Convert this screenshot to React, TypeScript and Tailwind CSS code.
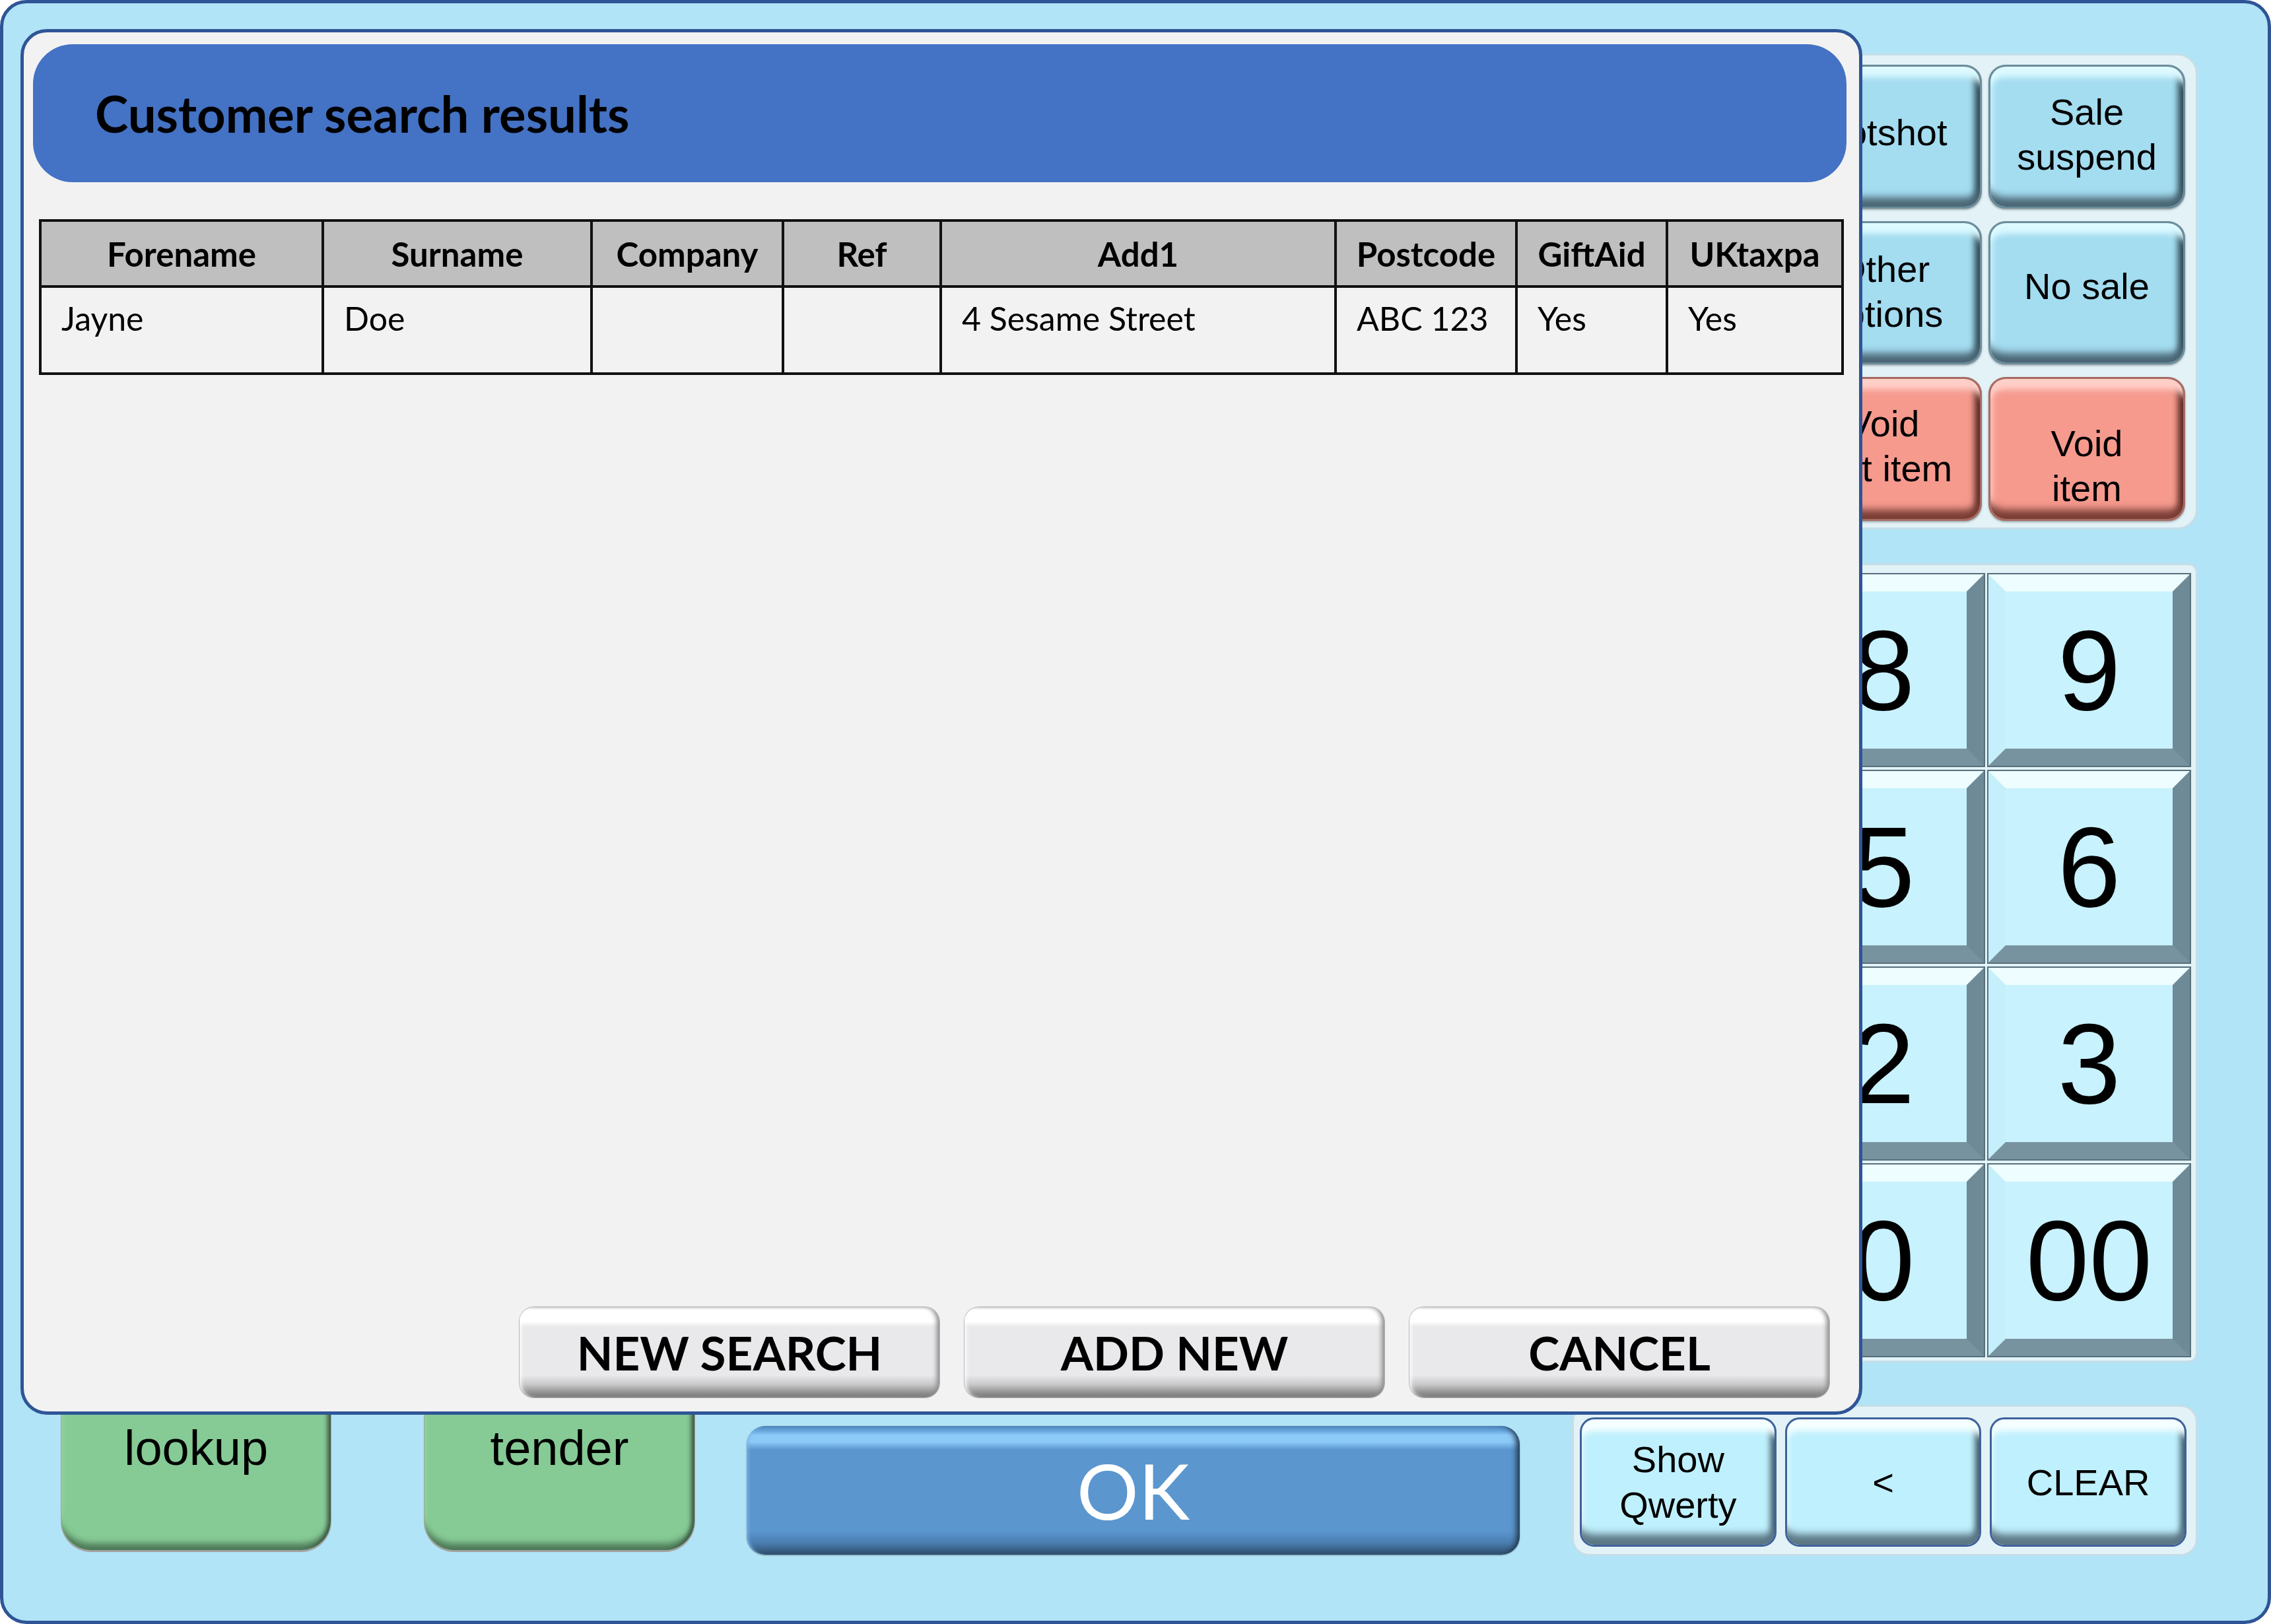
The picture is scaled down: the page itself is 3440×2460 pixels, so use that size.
import React from 'react';

const arial = "font-['Liberation_Sans','Arial',sans-serif]";
const calibri = "font-['Lato','Noto_Sans',sans-serif]";

type FnKey = { lines: string[]; red?: boolean; pad: string };

const fnKeys: FnKey[] = [
  { lines: ['Hotshot'], pad: 'pb-[12px]' },
  { lines: ['Sale', 'suspend'], pad: 'pb-[6px]' },
  { lines: ['Other', 'options'], pad: 'pb-[2px]' },
  { lines: ['No sale'], pad: 'pb-[18px]' },
  { lines: ['Void', 'last item'], red: true, pad: 'pb-[8px]' },
  { lines: ['Void', 'item'], red: true, pad: 'pt-[52px]' },
];

const numKeys = ['7', '8', '9', '4', '5', '6', '1', '2', '3', '.', '0', '00'];

const columns = [
  { name: 'Forename', width: 'w-[428px]', value: 'Jayne' },
  { name: 'Surname', width: 'w-[407px]', value: 'Doe' },
  { name: 'Company', width: 'w-[290px]', value: '' },
  { name: 'Ref', width: 'w-[239px]', value: '' },
  { name: 'Add1', width: 'w-[598px]', value: '4 Sesame Street' },
  { name: 'Postcode', width: 'w-[274px]', value: 'ABC 123' },
  { name: 'GiftAid', width: 'w-[228px]', value: 'Yes' },
  { name: 'UKtaxpa', width: 'w-[266px]', value: 'Yes' },
];

function FunctionKey({ k }: { k: FnKey }) {
  return (
    <div
      className={`flex flex-col items-center justify-center rounded-[26px] border-[3px] text-[56px] leading-[68px] text-black ${arial} ${
        k.red
          ? 'border-[#a66b63] bg-[#f69a8e] shadow-[inset_0_28px_10px_-12px_#ffd0c8,inset_0_-26px_12px_-12px_#7a3e36,inset_-18px_0_10px_-10px_#5a2b25,inset_14px_0_8px_-10px_#ffc4bb,0_2px_3px_rgba(0,0,0,0.3)]'
          : 'border-[#6b8c9a] bg-[#a4dcf0] shadow-[inset_0_28px_10px_-12px_#dcfaff,inset_0_-26px_12px_-12px_#4b6775,inset_-18px_0_10px_-10px_#2f4a56,inset_14px_0_8px_-10px_#c8f2fc,0_2px_3px_rgba(0,0,0,0.3)]'
      } ${k.pad}`}
    >
      {k.lines.map((l) => (
        <span key={l}>{l}</span>
      ))}
    </div>
  );
}

function NumKey({ label }: { label: string }) {
  return (
    <div className="h-[290px] shadow-[0_0_0_2px_#56707b]">
      <div
        className={`flex h-full items-center justify-center border-[26px] border-t-[#eefdff] border-l-[#c4effb] border-r-[#6f8a97] border-b-[#7893a0] bg-[#c8f2fd] text-[172px] leading-none text-black ${arial}`}
      >
        {label}
      </div>
    </div>
  );
}

function SmallKey({ lines }: { lines: string[] }) {
  return (
    <div
      className={`flex h-[196px] flex-col items-center justify-center rounded-[22px] border-[3px] border-[#3f629a] bg-[#bff0fd] text-[56px] leading-[69px] text-black shadow-[inset_0_30px_10px_-12px_#f4feff,inset_0_-28px_12px_-12px_#5c7785,inset_-16px_0_10px_-10px_#3b5665,inset_12px_0_8px_-10px_#e4fbff] ${arial}`}
    >
      {lines.map((l) => (
        <span key={l}>{l}</span>
      ))}
    </div>
  );
}

function DialogButton({ label }: { label: string }) {
  return (
    <div
      className={`flex h-[137px] w-[636px] items-center justify-center rounded-[22px] bg-[linear-gradient(to_bottom,#d9d9d9_0px,#ffffff_4px,#ffffff_22px,#e9e8eb_30px,#e9e8eb_calc(100%_-_34px),#c9c9cb_calc(100%_-_20px),#8a8a8a_calc(100%_-_6px),#7a7a7a_100%)] text-[71px] font-bold leading-none text-black shadow-[inset_-8px_0_7px_-4px_#8c8c8c,inset_6px_0_6px_-4px_#ffffff,0_0_0_1px_#b5b5b5] ${calibri}`}
    >
      {label}
    </div>
  );
}

export default function App() {
  return (
    <div className="h-[2460px] w-[3440px] bg-white">
      <div className="relative flex h-[2460px] w-[3440px] flex-col rounded-[40px] border-[5px] border-[#2f5597] bg-[#b1e4f6] pb-[98px] pl-[88px] pr-[106px] pt-[76px]">
        {/* register screen behind the dialog */}
        <div className="flex flex-1 justify-end">
          <div className="flex flex-col items-end gap-[51px]">
            <div className="grid h-[721px] w-[642px] grid-cols-2 grid-rows-3 gap-x-[10px] gap-y-[19px] rounded-[30px] border-[3px] border-[#c4dee8] bg-[#e2f2f7] pb-[10px] pl-[14px] pr-[16px] pt-[14px]">
              {fnKeys.map((k) => (
                <FunctionKey key={k.lines.join(' ')} k={k} />
              ))}
            </div>
            <div className="grid h-[1211px] w-[953px] grid-cols-3 gap-x-[7px] gap-y-[8px] rounded-[14px] border-[3px] border-[#c4dee8] bg-[#e2f2f7] pb-[7px] pl-[9px] pr-[9px] pt-[14px]">
              {numKeys.map((n) => (
                <NumKey key={n} label={n} />
              ))}
            </div>
          </div>
        </div>

        <div className="mt-[64px] flex h-[229px] items-end">
          <div
            className={`mb-[9px] flex h-[290px] w-[408px] shrink-0 items-center justify-center rounded-[45px] bg-[#86ca95] pb-[18px] text-[74px] leading-none text-black shadow-[inset_-9px_0_6px_-4px_#3b5843,inset_0_-16px_10px_-6px_#4f7b59,inset_6px_0_6px_-4px_#9bdca8,0_2px_0_1px_#a3a3a3] ${arial}`}
          >
            lookup
          </div>
          <div
            className={`mb-[9px] ml-[142px] flex h-[290px] w-[409px] shrink-0 items-center justify-center rounded-[45px] bg-[#86ca95] pb-[18px] text-[74px] leading-none text-black shadow-[inset_-9px_0_6px_-4px_#3b5843,inset_0_-16px_10px_-6px_#4f7b59,inset_6px_0_6px_-4px_#9bdca8,0_2px_0_1px_#a3a3a3] ${arial}`}
          >
            tender
          </div>
          <div
            className={`mb-[2px] ml-[79px] flex h-[195px] w-[1171px] shrink-0 items-center justify-center rounded-[28px] bg-[linear-gradient(to_bottom,#4f88c0_0px,#6aa8de_8px,#8ccaf8_14px,#8ccaf8_24px,#5b96cf_36px,#5b96cf_calc(100%_-_36px),#4a7eb0_calc(100%_-_18px),#2e4d6c_100%)] text-[117px] leading-none text-white shadow-[inset_-10px_0_8px_-5px_#22384f,inset_5px_0_5px_-3px_#7fb5e5,0_1px_2px_rgba(0,0,0,0.4)] ${calibri}`}
          >
            OK
          </div>
          <div className="ml-[79px] grid h-[229px] w-[948px] shrink-0 grid-cols-3 gap-x-[13px] rounded-[26px] border-[3px] border-[#c4dee8] bg-[#e2f2f7] pb-[11px] pl-[9px] pr-[14px] pt-[16px]">
            <SmallKey lines={['Show', 'Qwerty']} />
            <SmallKey lines={['<']} />
            <SmallKey lines={['CLEAR']} />
          </div>
        </div>

        {/* customer search dialog */}
        <div className="absolute left-[26px] top-[39px] flex h-[2099px] w-[2790px] flex-col rounded-[40px] border-[5px] border-[#2f5597] bg-[#f2f2f2] pb-[21px] pl-[14px] pr-[19px] pt-[18px]">
          <div className="flex h-[209px] items-center rounded-[60px] bg-[#4472c4] pl-[94px]">
            <h1 className={`text-[76px] font-bold leading-none text-black ${calibri}`}>Customer search results</h1>
          </div>

          <table className={`ml-[9px] mt-[56px] w-[2730px] table-fixed border-collapse text-black ${calibri}`}>
            <colgroup>
              {columns.map((c) => (
                <col key={c.name} className={c.width} />
              ))}
            </colgroup>
            <thead>
              <tr>
                {columns.map((c) => (
                  <th
                    key={c.name}
                    className="h-[100px] border-[4px] border-[#111] bg-[#bfbfbf] text-center text-[51px] font-bold leading-none"
                  >
                    {c.name}
                  </th>
                ))}
              </tr>
            </thead>
            <tbody>
              <tr>
                {columns.map((c) => (
                  <td
                    key={c.name}
                    className="h-[132px] border-[4px] border-[#111] pl-[30px] pt-[16px] text-left align-top text-[50px] leading-[60px]"
                  >
                    {c.value}
                  </td>
                ))}
              </tr>
            </tbody>
          </table>

          <div className="mt-auto flex justify-end gap-[38px] pr-[26px]">
            <DialogButton label="NEW SEARCH" />
            <DialogButton label="ADD NEW" />
            <DialogButton label="CANCEL" />
          </div>
        </div>
      </div>
    </div>
  );
}
